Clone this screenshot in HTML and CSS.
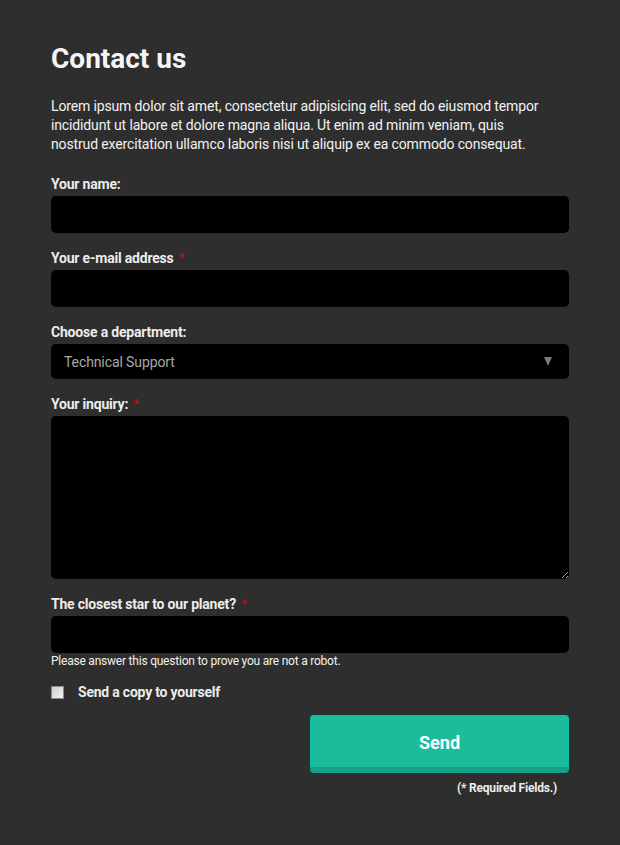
FILE: index.html
```html
<!DOCTYPE html>
<html lang="en">
<head>
<meta charset="utf-8">
<title>Contact us</title>
<link rel="stylesheet" href="styles.css">
</head>
<body>
<main class="page">
  <h1 class="title">Contact us</h1>
  <p class="intro">Lorem ipsum dolor sit amet, consectetur adipisicing elit, sed do eiusmod tempor incididunt ut labore et dolore magna aliqua. Ut enim ad minim veniam, quis nostrud exercitation ullamco laboris nisi ut aliquip ex ea commodo consequat.</p>
  <form class="form">
    <div class="field">
      <label class="label" for="name">Your name:</label>
      <input class="input" id="name" type="text">
    </div>
    <div class="field">
      <label class="label" for="email">Your e-mail address <span class="req">*</span></label>
      <input class="input" id="email" type="text">
    </div>
    <div class="field">
      <label class="label" for="dept">Choose a department:</label>
      <div class="select">
        <span class="select-value">Technical Support</span>
        <span class="select-arrow"></span>
      </div>
    </div>
    <div class="field">
      <label class="label" for="inq">Your inquiry: <span class="req">*</span></label>
      <textarea class="textarea" id="inq"></textarea>
    </div>
    <div class="field field-last">
      <label class="label" for="star">The closest star to our planet? <span class="req">*</span></label>
      <input class="input" id="star" type="text">
      <div class="help">Please answer this question to prove you are not a robot.</div>
    </div>
    <label class="check">
      <input class="checkbox" type="checkbox">
      <span>Send a copy to yourself</span>
    </label>
    <div class="actions">
      <button class="send" type="button">Send</button>
    </div>
    <div class="note">(* Required Fields.)</div>
  </form>
</main>
</body>
</html>
```
FILE: styles.css
```css
* { box-sizing: border-box; }
html, body { margin: 0; padding: 0; }
body {
  background: #2e2e2e;
  color: #f2f2f2;
  font-family: Roboto, "Noto Sans", "Liberation Sans", sans-serif;
  font-size: 14px;
}
.page {
  width: 518px;
  margin-left: 51px;
  padding-top: 42px;
  padding-bottom: 40px;
}
.title {
  margin: 0;
  font-size: 28px;
  line-height: 34px;
  font-weight: 700;
  color: #f5f5f5;
}
.intro {
  margin: 21px 0 20px;
  padding-right: 16px;
  font-size: 14px;
  line-height: 19px;
  letter-spacing: -0.14px;
  color: #f2f2f2;
}
.form { display: flex; flex-direction: column; }
.field { display: flex; flex-direction: column; margin-bottom: 15px; }
.field-last { margin-bottom: 0; }
.label {
  height: 20px;
  font-size: 14px;
  line-height: 20px;
  font-weight: 700;
  letter-spacing: -0.2px;
  color: #ececec;
  margin-bottom: 2px;
}
.req {
  color: #e00000;
  font-size: 12px;
  line-height: 0;
  margin-left: 2px;
  position: relative;
  top: -1px;
}
.input {
  height: 37px;
  background: #000;
  border: 0;
  border-radius: 5px;
  color: #ddd;
  padding: 0 13px;
  font: inherit;
  outline: none;
}
.select {
  height: 35px;
  background: #000;
  border-radius: 5px;
  display: flex;
  align-items: center;
  justify-content: space-between;
  padding: 0 17px 0 13px;
}
.select-value { color: #a8a8a8; font-size: 14px; letter-spacing: -0.1px; }
.select-arrow {
  width: 0; height: 0;
  border-left: 4px solid transparent;
  border-right: 4px solid transparent;
  border-top: 9px solid #7a7a7a;
}
.textarea {
  height: 163px;
  background: #000;
  border: 0;
  border-radius: 5px;
  color: #ddd;
  padding: 10px 13px;
  font: inherit;
  outline: none;
  resize: vertical;
}
.help {
  font-size: 12px;
  line-height: 16px;
  letter-spacing: -0.22px;
  color: #f0f0f0;
}
.check {
  display: flex;
  align-items: center;
  height: 20px;
  margin-top: 13px;
  font-weight: 700;
  font-size: 14px;
  letter-spacing: -0.22px;
  color: #ececec;
}
.checkbox {
  appearance: none;
  -webkit-appearance: none;
  width: 13px;
  height: 13px;
  margin: 0 14px 0 0;
  border: 1px solid #8a8a8a;
  background: linear-gradient(135deg, #cfcfcf, #f4f4f4);
}
.actions { display: flex; justify-content: flex-end; margin-top: 13px; }
.send {
  width: 259px;
  height: 58px;
  background: #1abc9c;
  border: 0;
  border-bottom: 6px solid #17a085;
  border-radius: 4px;
  color: #fff;
  font-family: inherit;
  font-size: 18px;
  font-weight: 700;
  padding: 2px 0 0;
}
.note {
  align-self: flex-end;
  margin: 7px 12px 0 0;
  font-size: 12px;
  line-height: 16px;
  font-weight: 700;
  letter-spacing: -0.2px;
  color: #ececec;
}
```
